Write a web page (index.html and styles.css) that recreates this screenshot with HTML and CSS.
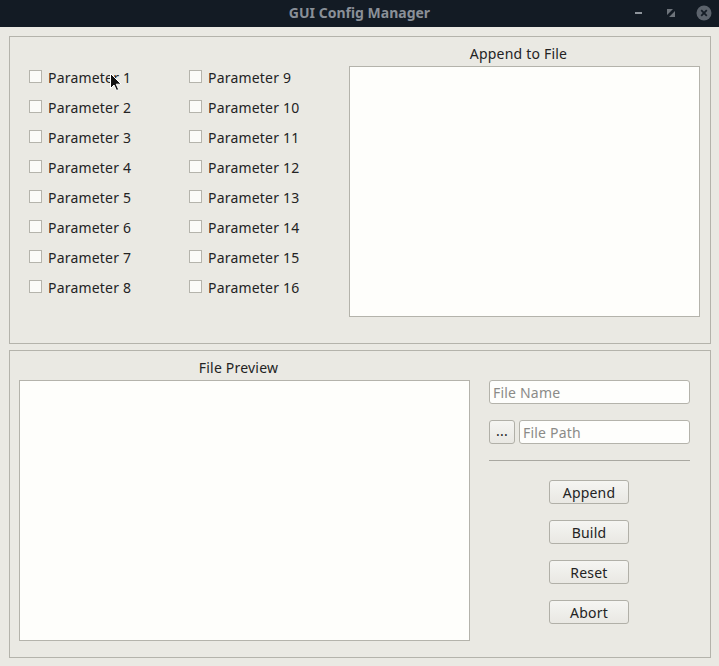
FILE: index.html
```html
<!DOCTYPE html>
<html>
<head>
<meta charset="utf-8">
<title>GUI Config Manager</title>
<link rel="stylesheet" href="styles.css">
</head>
<body>
<div class="titlebar">
  <div class="title">GUI Config Manager</div>
  <div class="controls">
    <svg class="ctl" width="14" height="14" viewBox="0 0 14 14"><rect x="3" y="6" width="7" height="2" fill="#8e949b"/></svg>
    <svg class="ctl" width="14" height="14" viewBox="0 0 14 14"><path d="M3 3h6l-6 6z M11 5v6h-6z" fill="#6e747b"/></svg>
    <svg class="ctl close" width="16" height="16" viewBox="0 0 16 16"><circle cx="8" cy="8" r="7.5" fill="#5c636c"/><path d="M5.2 5.2l5.6 5.6M10.8 5.2l-5.6 5.6" stroke="#151d26" stroke-width="1.8"/></svg>
  </div>
</div>
<div class="main">
  <div class="group top">
    <div class="checks">
      <label class="chk"><span class="box"></span>Parameter 1</label>
      <label class="chk"><span class="box"></span>Parameter 9</label>
      <label class="chk"><span class="box"></span>Parameter 2</label>
      <label class="chk"><span class="box"></span>Parameter 10</label>
      <label class="chk"><span class="box"></span>Parameter 3</label>
      <label class="chk"><span class="box"></span>Parameter 11</label>
      <label class="chk"><span class="box"></span>Parameter 4</label>
      <label class="chk"><span class="box"></span>Parameter 12</label>
      <label class="chk"><span class="box"></span>Parameter 5</label>
      <label class="chk"><span class="box"></span>Parameter 13</label>
      <label class="chk"><span class="box"></span>Parameter 6</label>
      <label class="chk"><span class="box"></span>Parameter 14</label>
      <label class="chk"><span class="box"></span>Parameter 7</label>
      <label class="chk"><span class="box"></span>Parameter 15</label>
      <label class="chk"><span class="box"></span>Parameter 8</label>
      <label class="chk"><span class="box"></span>Parameter 16</label>
    </div>
    <div class="append">
      <div class="caption">Append to File</div>
      <div class="textbox append-box"></div>
    </div>
  </div>
  <div class="group bottom">
    <div class="preview">
      <div class="caption">File Preview</div>
      <div class="textbox preview-box"></div>
    </div>
    <div class="side">
      <div class="input full"><span class="ph">File Name</span></div>
      <div class="pathrow">
        <div class="btn dots">...</div>
        <div class="input path"><span class="ph">File Path</span></div>
      </div>
      <div class="sep"></div>
      <div class="buttons">
        <div class="btn act">Append</div>
        <div class="btn act">Build</div>
        <div class="btn act">Reset</div>
        <div class="btn act">Abort</div>
      </div>
    </div>
  </div>
</div>
<svg class="cursor" width="12" height="19" viewBox="0 0 12 19"><path d="M0.5 0.5v15l3.5-3.5 2.5 5.5 2.2-1-2.5-5.3h5z" fill="#111" stroke="#fff" stroke-width="1"/></svg>
</body>
</html>
```
FILE: styles.css
```css
* { box-sizing: border-box; }
html, body {
  margin: 0;
  padding: 0;
  background: #eae9e3;
  font-family: "Noto Sans", "Open Sans", sans-serif;
  font-size: 14px;
  letter-spacing: 0.2px;
  color: #232323;
  width: 719px;
  height: 666px;
  overflow: hidden;
}
.titlebar {
  height: 27px;
  background: #131b24;
  display: flex;
  align-items: center;
  justify-content: center;
  position: relative;
}
.title {
  color: #8a9098;
  font-weight: bold;
  font-size: 14px;
  letter-spacing: 0;
  margin-top: -2px;
}
.controls {
  position: absolute;
  right: 7px;
  top: 5px;
  display: flex;
  align-items: center;
  gap: 18px;
}
.ctl { display: block; }
.main {
  padding: 9px 8px 0 9px;
  display: flex;
  flex-direction: column;
  gap: 6px;
}
.group {
  border: 1px solid #b4b3ab;
  height: 308px;
  width: 702px;
  display: flex;
}
.top {
  padding: 0 10px 0 19px;
}
.checks {
  width: 320px;
  margin-top: 33px;
  display: grid;
  grid-template-columns: 160px 160px;
  grid-auto-rows: 30px;
  align-content: start;
}
.chk {
  display: flex;
  align-items: flex-start;
  line-height: 13px;
  height: 30px;
  padding-top: 1px;
}
.box {
  width: 13px;
  height: 13px;
  border: 1px solid #b5b4ac;
  background: #fbfbf8;
  margin-right: 6px;
  flex: none;
  margin-top: -1px;
}
.append {
  width: 351px;
  display: flex;
  flex-direction: column;
}
.caption {
  height: 29px;
  line-height: 16px;
  padding-top: 9px;
  text-align: center;
  padding-right: 12px;
}
.textbox {
  background: #fefefb;
  border: 1px solid #b4b3ab;
}
.append-box { height: 251px; }
.bottom { padding: 0 0 0 9px; }
.preview {
  width: 451px;
  display: flex;
  flex-direction: column;
}
.preview-box { height: 261px; }
.side {
  margin-left: 19px;
  width: 201px;
  padding-top: 29px;
  display: flex;
  flex-direction: column;
}
.input {
  height: 24px;
  border: 1px solid #b4b3ab;
  border-radius: 3px;
  background: #fefefc;
  padding-left: 3px;
  line-height: 23px;
}
.ph { color: #8b8b88; }
.pathrow {
  margin-top: 16px;
  display: flex;
  gap: 4px;
}
.path { flex: 1; }
.btn {
  height: 24px;
  border: 1px solid #b1b0a8;
  border-radius: 3px;
  background: linear-gradient(#f5f5f2, #e9e8e3);
  text-align: center;
  line-height: 23px;
}
.dots { width: 26px; line-height: 20px; }
.sep {
  margin-top: 16px;
  height: 1px;
  background: #a9a8a1;
}
.buttons {
  margin-top: 19px;
  padding-left: 60px;
  display: flex;
  flex-direction: column;
  align-items: flex-start;
  gap: 16px;
}
.act { width: 80px; }
.cursor {
  position: absolute;
  left: 110px;
  top: 73px;
}
```
